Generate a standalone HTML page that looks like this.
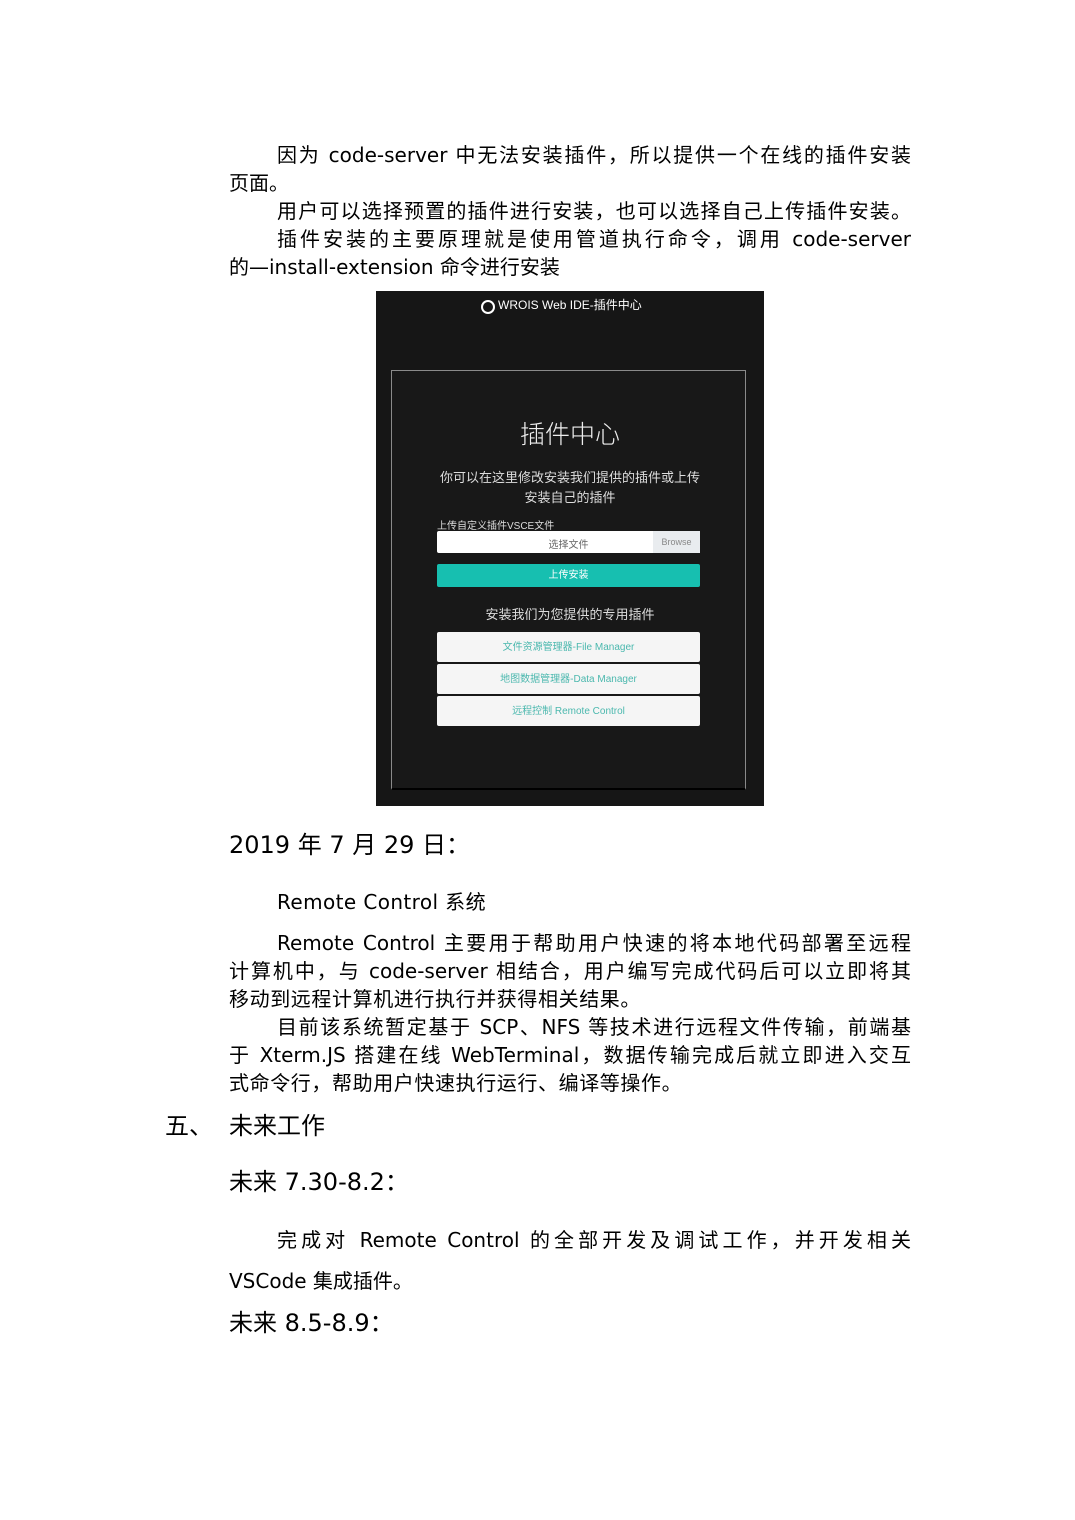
<!DOCTYPE html>
<html><head><meta charset="utf-8"><style>
body{margin:0;width:1075px;height:1520px;background:#fff;position:relative;overflow:hidden;font-family:"DejaVu Sans","Noto Sans CJK SC",sans-serif;color:#000}
.l{position:absolute;height:28px;line-height:28px;font-size:20px;white-space:nowrap}
.j{text-align:justify;text-align-last:justify;white-space:normal}
.h{font-size:24px;height:34px;line-height:34px}
.a{position:absolute}
.im{font-family:"Liberation Sans","Noto Sans CJK SC",sans-serif}
</style></head><body>
<div class="l j" style="left:277px;width:634px;top:141px">因为 code-server 中无法安装插件，所以提供一个在线的插件安装</div>
<div class="l" style="left:229px;top:169px">页面。</div>
<div class="l j" style="left:277px;width:634px;top:197px">用户可以选择预置的插件进行安装，也可以选择自己上传插件安装。</div>
<div class="l j" style="left:277px;width:634px;top:225px">插件安装的主要原理就是使用管道执行命令，调用 code-server</div>
<div class="l" style="left:229px;top:253px">的—install-extension 命令进行安装</div>

<div class="a im" style="left:376px;top:291px;width:388px;height:515px;background:#161616">
  <div class="a" style="left:105px;top:9px;width:10px;height:10px;border:2px solid #fff;border-radius:50%"></div>
  <div class="a" style="left:122px;top:6px;font-size:12px;color:#fff;line-height:16px">WROIS Web IDE-插件中心</div>
  <div class="a" style="left:15px;top:79px;width:353px;height:417px;border:1px solid #8a8a8a;border-bottom:2px solid #000;background:#181818"></div>
  <div class="a" style="left:0;width:388px;top:124px;text-align:center;font-size:25px;color:#eee;font-weight:300">插件中心</div>
  <div class="a" style="left:40px;width:308px;top:177px;text-align:center;font-size:13px;color:#ddd;line-height:20px">你可以在这里修改安装我们提供的插件或上传<br>安装自己的插件</div>
  <div class="a" style="left:61px;top:226px;font-size:10px;color:#ddd">上传自定义插件VSCE文件</div>
  <div class="a" style="left:61px;top:240px;width:263px;height:22px;background:#fff;border-radius:2px"></div>
  <div class="a" style="left:61px;top:245px;width:263px;text-align:center;font-size:10px;color:#666">选择文件</div>
  <div class="a" style="left:277px;top:240px;width:47px;height:22px;background:#e9ecef;font-size:9px;color:#888;text-align:center;line-height:22px">Browse</div>
  <div class="a" style="left:61px;top:273px;width:263px;height:23px;background:#17bfb0;border-radius:2px;color:#fff;font-size:10px;text-align:center;line-height:23px">上传安装</div>
  <div class="a" style="left:0;width:388px;top:313px;text-align:center;font-size:13px;color:#ddd">安装我们为您提供的专用插件</div>
  <div class="a" style="left:61px;top:341px;width:263px;height:30px;background:#f5f5f5;border-radius:2px;color:#4bb8ae;font-size:10px;text-align:center;line-height:32px">文件资源管理器-File Manager</div>
  <div class="a" style="left:61px;top:373px;width:263px;height:30px;background:#f5f5f5;border-radius:2px;color:#4bb8ae;font-size:10px;text-align:center;line-height:32px">地图数据管理器-Data Manager</div>
  <div class="a" style="left:61px;top:405px;width:263px;height:30px;background:#f5f5f5;border-radius:2px;color:#4bb8ae;font-size:10px;text-align:center;line-height:32px">远程控制 Remote Control</div>
</div>

<div class="l h" style="left:229px;top:828px">2019 年 7 月 29 日：</div>
<div class="l" style="left:277px;top:888px;letter-spacing:0.4px">Remote Control 系统</div>
<div class="l j" style="left:277px;width:634px;top:929px">Remote Control 主要用于帮助用户快速的将本地代码部署至远程</div>
<div class="l j" style="left:229px;width:682px;top:957px">计算机中，与 code-server 相结合，用户编写完成代码后可以立即将其</div>
<div class="l" style="left:229px;top:985px;letter-spacing:0.6px">移动到远程计算机进行执行并获得相关结果。</div>
<div class="l j" style="left:277px;width:634px;top:1013px">目前该系统暂定基于 SCP、NFS 等技术进行远程文件传输，前端基</div>
<div class="l j" style="left:229px;width:682px;top:1041px">于 Xterm.JS 搭建在线 WebTerminal，数据传输完成后就立即进入交互</div>
<div class="l" style="left:229px;top:1069px;letter-spacing:0.6px">式命令行，帮助用户快速执行运行、编译等操作。</div>
<div class="l h" style="left:165px;top:1109px">五、</div>
<div class="l h" style="left:229px;top:1109px">未来工作</div>
<div class="l h" style="left:229px;top:1165px">未来 7.30-8.2：</div>
<div class="l j" style="left:277px;width:634px;top:1226px">完成对 Remote Control 的全部开发及调试工作，并开发相关</div>
<div class="l" style="left:229px;top:1267px">VSCode 集成插件。</div>
<div class="l h" style="left:229px;top:1306px">未来 8.5-8.9：</div>
</body></html>
